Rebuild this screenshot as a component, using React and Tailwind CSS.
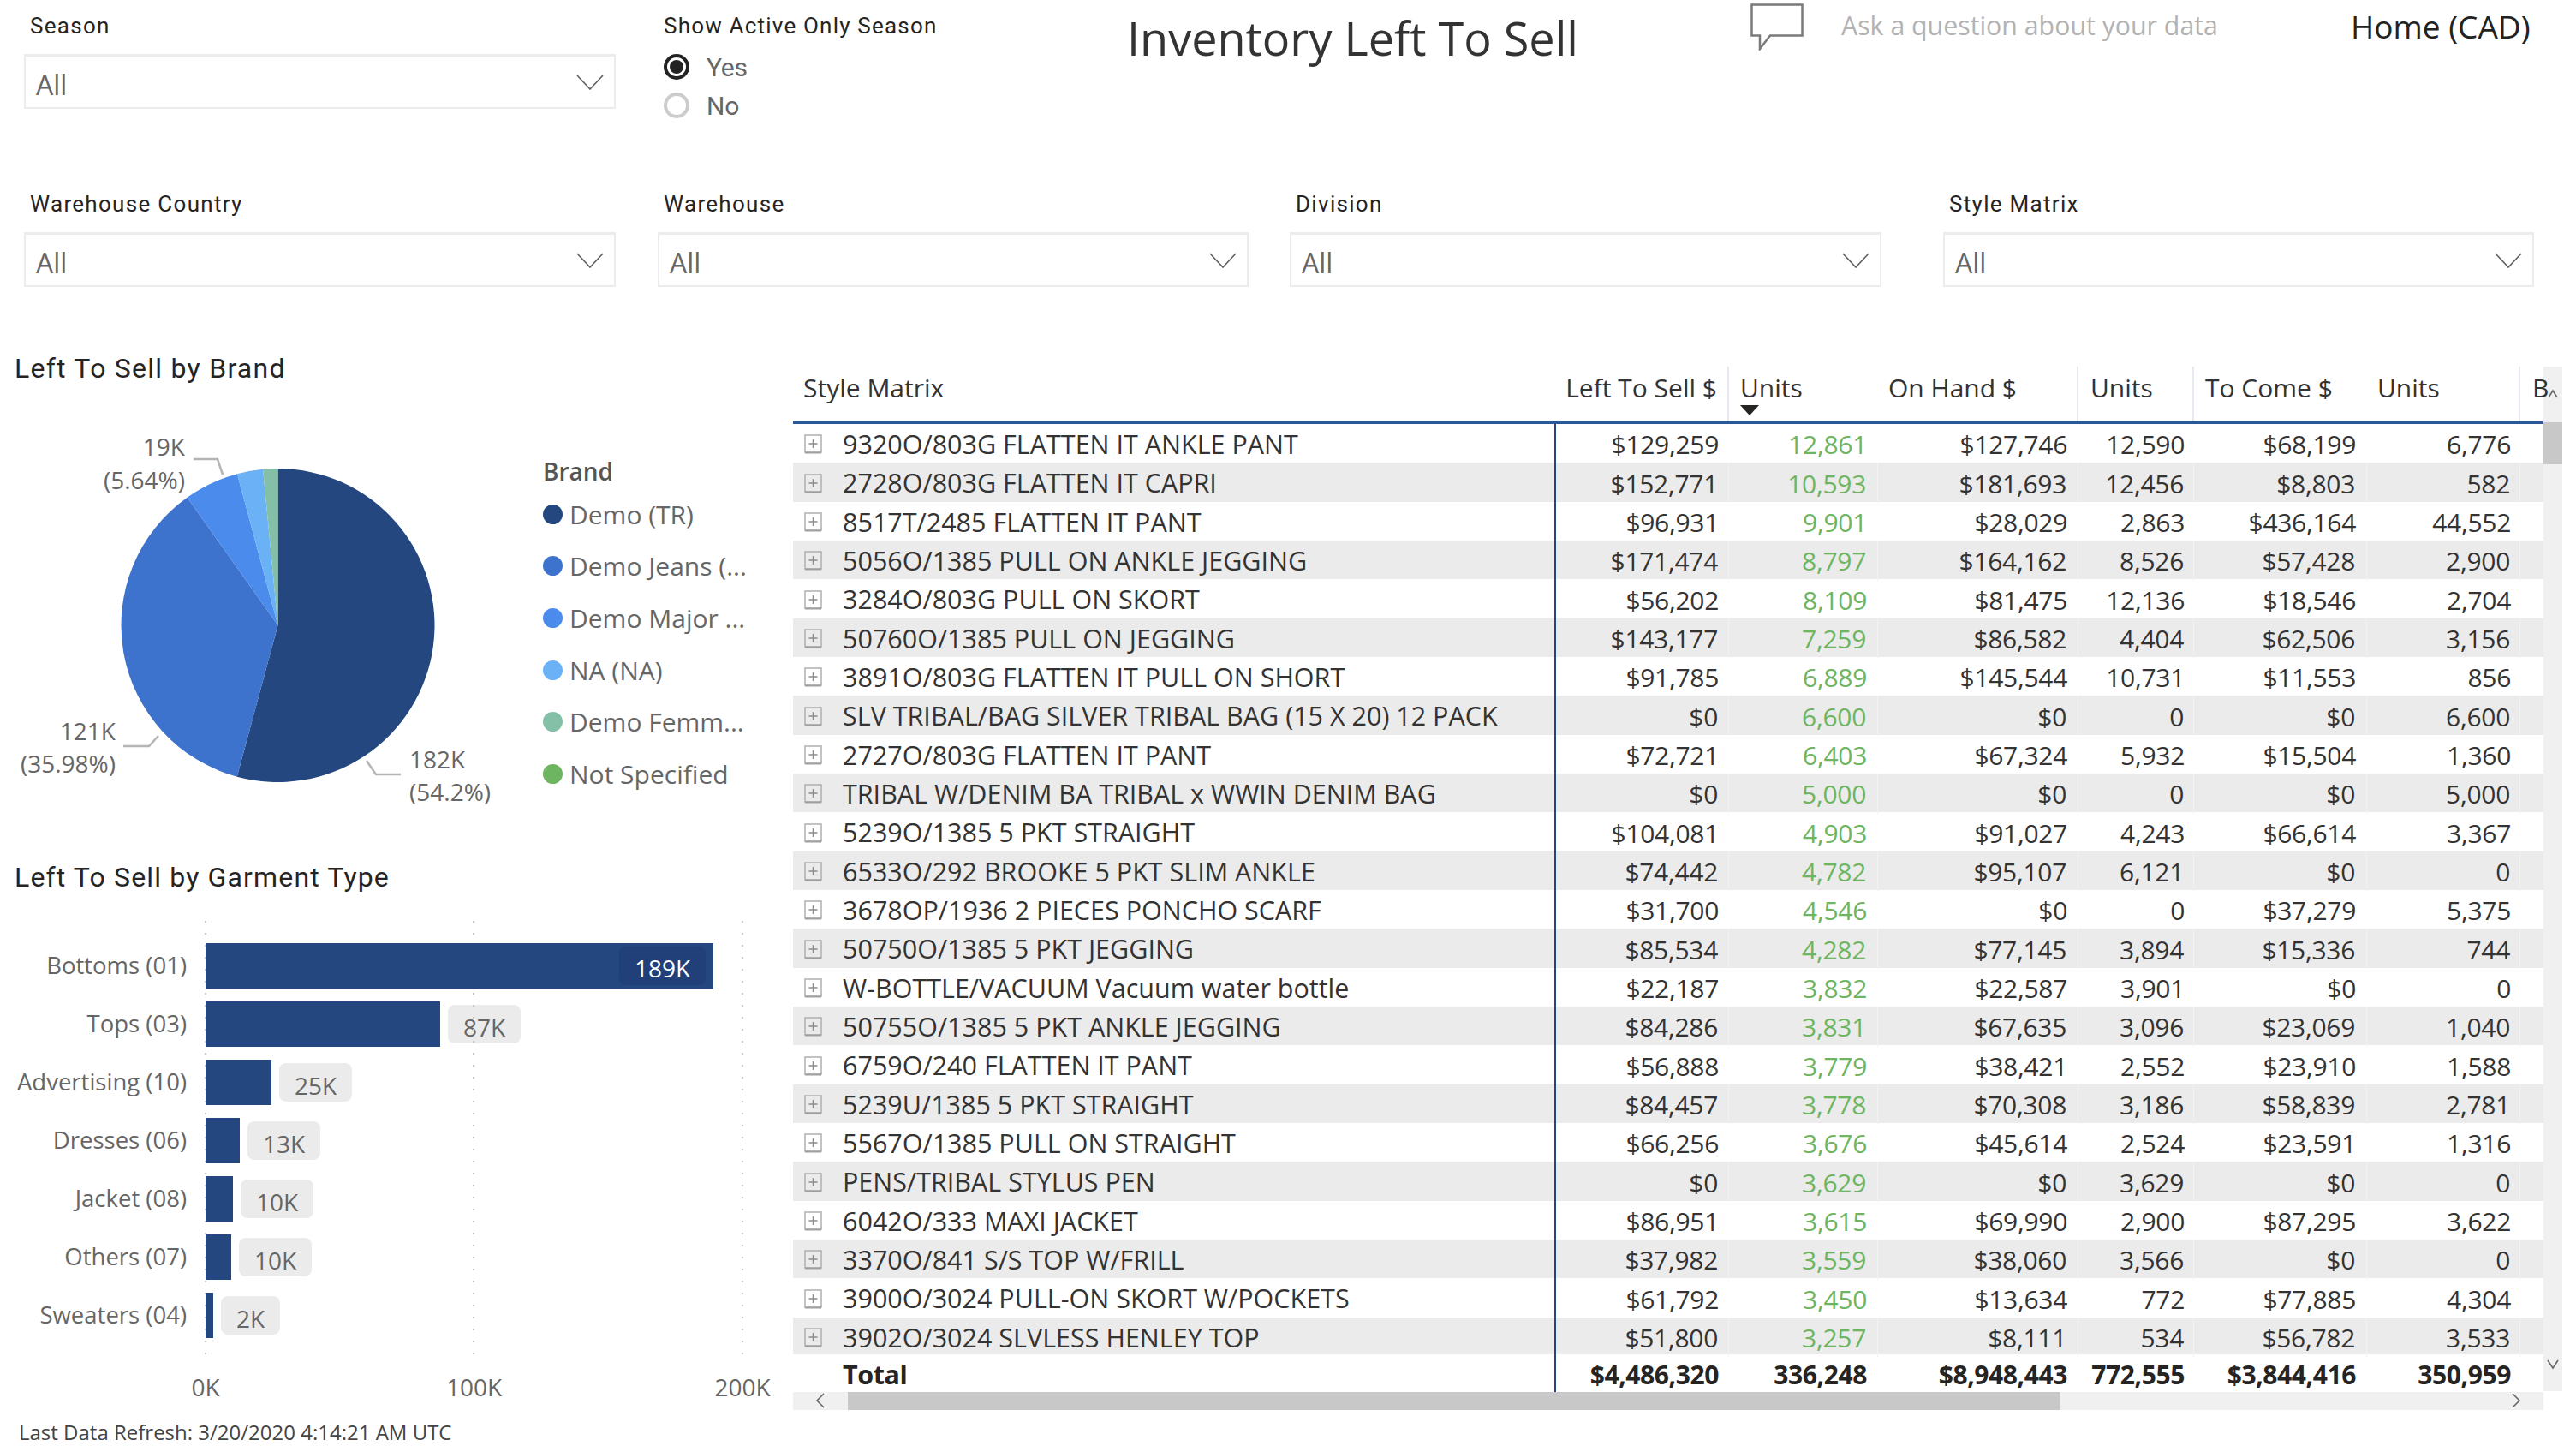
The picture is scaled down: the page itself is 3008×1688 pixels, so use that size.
const BODY_FONT = "[font-family:'Open_Sans',sans-serif]"

const ROWS = [
  ['9320O/803G FLATTEN IT ANKLE PANT', '$129,259', '12,861', '$127,746', '12,590', '$68,199', '6,776'],
  ['2728O/803G FLATTEN IT CAPRI', '$152,771', '10,593', '$181,693', '12,456', '$8,803', '582'],
  ['8517T/2485 FLATTEN IT PANT', '$96,931', '9,901', '$28,029', '2,863', '$436,164', '44,552'],
  ['5056O/1385 PULL ON ANKLE JEGGING', '$171,474', '8,797', '$164,162', '8,526', '$57,428', '2,900'],
  ['3284O/803G PULL ON SKORT', '$56,202', '8,109', '$81,475', '12,136', '$18,546', '2,704'],
  ['50760O/1385 PULL ON JEGGING', '$143,177', '7,259', '$86,582', '4,404', '$62,506', '3,156'],
  ['3891O/803G FLATTEN IT PULL ON SHORT', '$91,785', '6,889', '$145,544', '10,731', '$11,553', '856'],
  ['SLV TRIBAL/BAG SILVER TRIBAL BAG (15 X 20) 12 PACK', '$0', '6,600', '$0', '0', '$0', '6,600'],
  ['2727O/803G FLATTEN IT PANT', '$72,721', '6,403', '$67,324', '5,932', '$15,504', '1,360'],
  ['TRIBAL W/DENIM BA TRIBAL x WWIN DENIM BAG', '$0', '5,000', '$0', '0', '$0', '5,000'],
  ['5239O/1385 5 PKT STRAIGHT', '$104,081', '4,903', '$91,027', '4,243', '$66,614', '3,367'],
  ['6533O/292 BROOKE 5 PKT SLIM ANKLE', '$74,442', '4,782', '$95,107', '6,121', '$0', '0'],
  ['3678OP/1936 2 PIECES PONCHO SCARF', '$31,700', '4,546', '$0', '0', '$37,279', '5,375'],
  ['50750O/1385 5 PKT JEGGING', '$85,534', '4,282', '$77,145', '3,894', '$15,336', '744'],
  ['W-BOTTLE/VACUUM Vacuum water bottle', '$22,187', '3,832', '$22,587', '3,901', '$0', '0'],
  ['50755O/1385 5 PKT ANKLE JEGGING', '$84,286', '3,831', '$67,635', '3,096', '$23,069', '1,040'],
  ['6759O/240 FLATTEN IT PANT', '$56,888', '3,779', '$38,421', '2,552', '$23,910', '1,588'],
  ['5239U/1385 5 PKT STRAIGHT', '$84,457', '3,778', '$70,308', '3,186', '$58,839', '2,781'],
  ['5567O/1385 PULL ON STRAIGHT', '$66,256', '3,676', '$45,614', '2,524', '$23,591', '1,316'],
  ['PENS/TRIBAL STYLUS PEN', '$0', '3,629', '$0', '3,629', '$0', '0'],
  ['6042O/333 MAXI JACKET', '$86,951', '3,615', '$69,990', '2,900', '$87,295', '3,622'],
  ['3370O/841 S/S TOP W/FRILL', '$37,982', '3,559', '$38,060', '3,566', '$0', '0'],
  ['3900O/3024 PULL-ON SKORT W/POCKETS', '$61,792', '3,450', '$13,634', '772', '$77,885', '4,304'],
  ['3902O/3024 SLVLESS HENLEY TOP', '$51,800', '3,257', '$8,111', '534', '$56,782', '3,533'],
]
const TOTAL = ['Total', '$4,486,320', '336,248', '$8,948,443', '772,555', '$3,844,416', '350,959']

const BARS = [
  { name: 'Bottoms (01)', w: 593, label: '189K', inside: true },
  { name: 'Tops (03)', w: 274, label: '87K', pill: 85 },
  { name: 'Advertising (10)', w: 77, label: '25K', pill: 85 },
  { name: 'Dresses (06)', w: 40, label: '13K', pill: 85 },
  { name: 'Jacket (08)', w: 32, label: '10K', pill: 85 },
  { name: 'Others (07)', w: 30, label: '10K', pill: 85 },
  { name: 'Sweaters (04)', w: 8, label: '2K', pill: 69 },
]

const LEGEND = [
  ['Demo (TR)', 'bg-[#24477f]'],
  ['Demo Jeans (...', 'bg-[#3e73cd]'],
  ['Demo Major ...', 'bg-[#4a8bec]'],
  ['NA (NA)', 'bg-[#6bb1f5]'],
  ['Demo Femm...', 'bg-[#84bfa8]'],
  ['Not Specified', 'bg-[#6db560]'],
]

// pie angles in percent, clockwise from 12 o'clock
const SLICES = [
  [54.2, '#24477f'],
  [35.98, '#3e73cd'],
  [5.64, '#4a8bec'],
  [2.66, '#6bb1f5'],
  [1.52, '#84bfa8'],
]

const GRID = 'grid grid-cols-[891px_202px_174px_234px_135px_202px_179px_27px]'
const GRID_LINE = 'absolute top-0 h-full w-[2px] bg-[repeating-linear-gradient(to_bottom,#c8c8c8_0,#c8c8c8_2px,transparent_2px,transparent_14px)]'

function slicePath(cx, cy, r, from, to) {
  const a0 = (from / 100) * Math.PI * 2
  const a1 = (to / 100) * Math.PI * 2
  const large = to - from > 50 ? 1 : 0
  return `M${cx} ${cy}L${cx + r * Math.sin(a0)} ${cy - r * Math.cos(a0)}A${r} ${r} 0 ${large} 1 ${cx + r * Math.sin(a1)} ${cy - r * Math.cos(a1)}Z`
}

function Filter({ label, className }) {
  return (
    <div className={className}>
      <div className="h-[63px] pl-[7px] pt-[14px] text-[26px] leading-[32px] tracking-[1.3px] text-[#252423] [font-family:Roboto,sans-serif]">
        {label}
      </div>
      <div className={`flex h-[64px] items-center justify-between border-2 border-t-[3px] border-[#ececec] pl-[12px] pr-[12px] ${BODY_FONT}`}>
        <span className="pt-[6px] text-[32px] text-[#666666]">All</span>
        <svg width="32" height="18" viewBox="0 0 32 18" fill="none" stroke="#605e5c" strokeWidth="1.6">
          <path d="M1 1l15 16L31 1" />
        </svg>
      </div>
    </div>
  )
}

function Radio({ on, label }) {
  return (
    <div className="flex h-[45px] items-center gap-[20px]">
      <span
        className={`flex h-[30px] w-[30px] items-center justify-center rounded-full border-[4px] ${
          on ? 'border-[#222222]' : 'border-[#cccccc]'
        }`}
      >
        {on && <span className="h-[16px] w-[16px] rounded-full bg-[#222222]" />}
      </span>
      <span className="pt-[2px] text-[30px] tracking-[-0.2px] text-[#666666] [font-family:Roboto,sans-serif]">{label}</span>
    </div>
  )
}

function TopBar() {
  return (
    <div className="flex h-[208px] items-start">
      <Filter label="Season" className="ml-[28px] w-[691px]" />
      <div className="ml-[56px] w-[541px] pl-0">
        <div className="h-[55px] pt-[14px] text-[26px] leading-[32px] tracking-[1.2px] text-[#252423] [font-family:Roboto,sans-serif]">
          Show Active Only Season
        </div>
        <Radio on label="Yes" />
        <Radio label="No" />
      </div>
      <h1 className={`w-[728px] pt-[4px] text-[54px] leading-[80px] font-normal text-[#333333] ${BODY_FONT}`}>
        Inventory Left To Sell
      </h1>
      <div className="mt-[3px] h-[56px] w-[106px]">
        <svg width="62" height="56" viewBox="0 0 62 56" fill="none" stroke="#7a7a7a" strokeWidth="2.5">
          <path d="M1.5 2.5h59v36H23L11 54V38.5H1.5z" />
        </svg>
      </div>
      <div className={`w-[595px] pt-[8px] text-[30.3px] leading-[44px] text-[#b3b3b3] ${BODY_FONT}`}>
        Ask a question about your data
      </div>
      <div className={`pt-[6px] text-[37px] leading-[50px] font-medium text-[#222222] ${BODY_FONT}`}>Home (CAD)</div>
    </div>
  )
}

function FilterRow() {
  return (
    <div className="flex h-[202px] items-start">
      <Filter label="Warehouse Country" className="ml-[28px] w-[691px]" />
      <Filter label="Warehouse" className="ml-[49px] w-[690px]" />
      <Filter label="Division" className="ml-[48px] w-[691px]" />
      <Filter label="Style Matrix" className="ml-[72px] w-[690px]" />
    </div>
  )
}

function PieChart() {
  let acc = 0
  const paths = SLICES.map(([pct, fill]) => {
    const d = slicePath(324.5, 280, 183, acc, acc + pct)
    acc += pct
    return <path key={fill} d={d} fill={fill} />
  })
  const textCls = `text-[28px] ${BODY_FONT}`
  return (
    <svg width="630" height="554" viewBox="0 0 630 554" className="shrink-0">
      {paths}
      <g fill="none" stroke="#b5b5b5" strokeWidth="2.5">
        <path d="M226 86h28l6 18" />
        <path d="M144 421h30l11-12" />
        <path d="M468 454h-29l-11-16" />
      </g>
      <g fill="#666666" className={textCls}>
        <text x="216" y="82" textAnchor="end">19K</text>
        <text x="216" y="121" textAnchor="end">(5.64%)</text>
        <text x="135" y="414" textAnchor="end">121K</text>
        <text x="135" y="452" textAnchor="end">(35.98%)</text>
        <text x="478" y="447">182K</text>
        <text x="478" y="485">(54.2%)</text>
      </g>
    </svg>
  )
}

function BrandSection() {
  return (
    <div className="h-[594px]">
      <h2 className="h-[40px] pl-[17px] text-[32px] leading-[40px] font-normal tracking-[1.25px] text-[#252423] [font-family:Roboto,sans-serif]">
        Left To Sell by Brand
      </h2>
      <div className="flex">
        <PieChart />
        <div className={`ml-[4px] mt-[80px] ${BODY_FONT}`}>
          <div className="h-[40px] text-[28px] leading-[40px] font-semibold text-[#555555]">Brand</div>
          {LEGEND.map(([name, dot]) => (
            <div key={name} className="flex h-[60.6px] items-center gap-[8px]">
              <span className={`h-[23px] w-[23px] rounded-full ${dot}`} />
              <span className="text-[30px] whitespace-nowrap text-[#666666]">{name}</span>
            </div>
          ))}
        </div>
      </div>
    </div>
  )
}

function GarmentSection() {
  return (
    <div className={BODY_FONT}>
      <h2 className="h-[71px] pl-[17px] pt-0 text-[32px] leading-[40px] font-normal tracking-[1.15px] text-[#252423] [font-family:Roboto,sans-serif]">
        Left To Sell by Garment Type
      </h2>
      <div className="relative h-[516px] pt-[26px]">
        <div className={`${GRID_LINE} left-[239px]`} />
        <div className={`${GRID_LINE} left-[552px]`} />
        <div className={`${GRID_LINE} left-[866px]`} />
        {BARS.map((b) => (
          <div key={b.name} className="mb-[15px] flex h-[53px] items-center">
            <div className="w-[218px] pb-[2px] text-right text-[27.5px] whitespace-nowrap text-[#666666]">{b.name}</div>
            <div
              className="relative z-10 ml-[22px] flex h-[53px] items-center justify-end bg-[#24477f] pr-[9px]"
              style={{ width: b.w }}
            >
              {b.inside && (
                <span className="flex h-[45px] w-[101px] items-center justify-center rounded-[8px] bg-[#21407a] pt-[4px] text-[28px] text-white">
                  {b.label}
                </span>
              )}
            </div>
            {!b.inside && (
              <span
                className="ml-[9px] flex h-[45px] items-center justify-center rounded-[8px] bg-[#ebebeb] pt-[6px] text-[28px] text-[#666666]"
                style={{ width: b.pill }}
              >
                {b.label}
              </span>
            )}
          </div>
        ))}
      </div>
      <div className="ml-[140px] flex h-[56px] w-[786px] gap-[113.5px] overflow-visible text-[28px] leading-[56px] text-[#666666]">
        <span className="w-[200px] shrink-0 text-center">0K</span>
        <span className="w-[200px] shrink-0 text-center">100K</span>
        <span className="w-[200px] shrink-0 text-center">200K</span>
      </div>
      <div className="pl-[22px] pt-[10px] text-[24px] leading-[30px] whitespace-nowrap text-[#444444]">
        Last Data Refresh: 3/20/2020 4:14:21 AM UTC
      </div>
    </div>
  )
}

function ExpandIcon() {
  return (
    <svg width="21" height="23" viewBox="0 0 21 23" className="shrink-0">
      <rect x="1" y="1" width="19" height="20" fill="none" stroke="#b0b0b0" strokeWidth="1.5" />
      <path d="M1 21.5h19" stroke="#a0a0a0" strokeWidth="2" />
      <path d="M10.5 6v10M5.5 11h10" stroke="#8c8c8c" strokeWidth="1.5" />
    </svg>
  )
}

function HeaderRow() {
  const cell = 'border-r-2 border-[#e6e9f0] text-[30px] leading-[50px] text-[#333333] whitespace-nowrap'
  return (
    <div className={`${GRID} h-[67px] border-b-[3px] border-[#2b5797] ${BODY_FONT}`}>
      <div className="pl-[12px] text-[30px] leading-[50px] text-[#333333]">Style Matrix</div>
      <div className={`${cell} pr-[12px] text-right`}>Left To Sell $</div>
      <div className="flex flex-col pl-[13px] text-[30px] leading-[50px] text-[#333333]">
        Units
        <svg width="22" height="12" viewBox="0 0 22 12" className="-mt-[5px]">
          <path d="M0 0h22L11 12z" fill="#252423" />
        </svg>
      </div>
      <div className={`${cell} pl-[12px]`}>On Hand $</div>
      <div className={`${cell} pl-[14px]`}>Units</div>
      <div className="pl-[13px] text-[30px] leading-[50px] whitespace-nowrap text-[#333333]">To Come $</div>
      <div className={`${cell} pl-[12px]`}>Units</div>
      <div className="relative z-10 pl-[14px] text-[30px] leading-[50px] text-[#333333]">B</div>
    </div>
  )
}

function DataRow({ row, stripe, bold, height = 'h-[45.33px]' }) {
  const divider = stripe ? 'border-r border-[#f2f2f2]' : ''
  const text = bold ? 'font-bold text-[#252423] tracking-[-0.4px]' : 'text-[#333333]'
  const num = `flex items-center justify-end tracking-[-0.3px] ${divider} ${text}`
  return (
    <div className={`${GRID} ${height} text-[30px] ${stripe ? 'bg-[#ebebeb]' : ''}`}>
      <div className="flex items-center gap-[24px] border-r-2 border-[#24477f] pl-[13px] pt-[1px]">
        {bold ? <span className="w-[21px]" /> : <ExpandIcon />}
        <span className={`whitespace-nowrap text-[30.5px] ${text}`}>{row[0]}</span>
      </div>
      <div className={`${num} pr-[12px] pt-[1px]`}>{row[1]}</div>
      <div className={`flex items-center justify-end pr-[13px] pt-[1px] tracking-[-0.3px] ${divider} ${bold ? text : 'text-[#6db560]'}`}>{row[2]}</div>
      <div className={`${num} pr-[13px] pt-[1px]`}>{row[3]}</div>
      <div className={`${num} pr-[11px] pt-[1px]`}>{row[4]}</div>
      <div className={`${num} pr-[13px] pt-[1px]`}>{row[5]}</div>
      <div className={`${num} pr-[11px] pt-[1px]`}>{row[6]}</div>
      <div />
    </div>
  )
}

function Matrix() {
  return (
    <div className="mt-[18px] flex items-start">
      <div className="w-[2044px]">
        <HeaderRow />
        <div className={BODY_FONT}>
          {ROWS.map((row, i) => (
            <DataRow key={row[0]} row={row} stripe={i % 2 === 1} height={i === 23 ? 'h-[43px]' : 'h-[45.33px]'} />
          ))}
          <DataRow row={TOTAL} bold height="h-[44px]" />
        </div>
        <div className="flex h-[21px] items-center bg-[#f0f0f0]">
          <div className="flex w-[64px] justify-center">
            <svg width="12" height="18" viewBox="0 0 12 18" fill="none" stroke="#666666" strokeWidth="1.6">
              <path d="M10 1L2 9l8 8" />
            </svg>
          </div>
          <div className="h-full w-[1416px] bg-[#c8c8c8]" />
          <div className="flex flex-1 justify-end pr-[26px]">
            <svg width="12" height="18" viewBox="0 0 12 18" fill="none" stroke="#666666" strokeWidth="1.6">
              <path d="M2 1l8 8-8 8" />
            </svg>
          </div>
        </div>
      </div>
      <div className="flex h-[1196px] w-[22px] flex-col items-center bg-[#f0f0f0]">
        <svg width="12" height="12" viewBox="0 0 12 12" fill="none" stroke="#666666" strokeWidth="1.6" className="mt-[26px]">
          <path d="M1 10l5-8 5 8" />
        </svg>
        <div className="mt-[27px] h-[49px] w-full bg-[#c8c8c8]" />
        <svg width="14" height="12" viewBox="0 0 14 12" fill="none" stroke="#666666" strokeWidth="1.6" className="mt-[1045px]">
          <path d="M1 1l6 9 6-9" />
        </svg>
      </div>
    </div>
  )
}

export default function App() {
  return (
    <div className="h-[1688px] w-[3008px] overflow-hidden bg-white">
      <TopBar />
      <FilterRow />
      <div className="flex">
        <div className="w-[926px] shrink-0">
          <BrandSection />
          <GarmentSection />
        </div>
        <Matrix />
      </div>
    </div>
  )
}
